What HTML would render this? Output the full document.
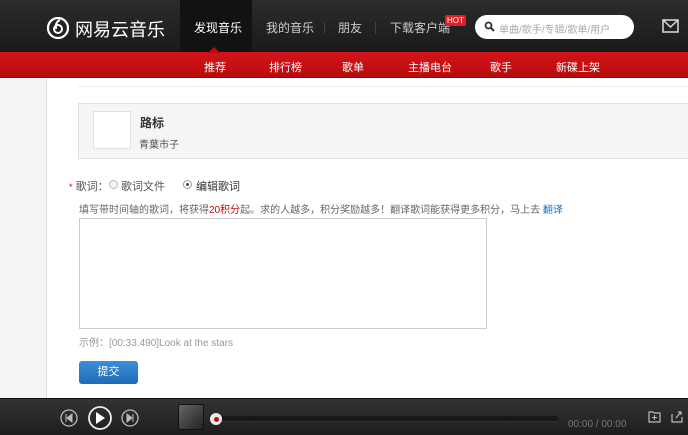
<!DOCTYPE html>
<html><head><meta charset="utf-8"><style>
*{margin:0;padding:0;box-sizing:border-box}
body{width:688px;height:435px;overflow:hidden;position:relative;background:#fff;font-family:"Liberation Sans","Noto Sans CJK SC",sans-serif;font-size:12px;color:#333}
.abs{position:absolute}
#hd{left:0;top:0;width:688px;height:52px;background:linear-gradient(#2c2c2c,#1a1a1a)}
#sub{left:0;top:52px;width:688px;height:26px;background:linear-gradient(#d4141a,#b80c0c);border-bottom:1px solid #a40011}
.nav{color:#ccc;font-size:12px;top:19px}
.sn{color:#fff;font-size:11px;top:59px}
</style></head><body>
<div id="hd" class="abs"></div>
<div class="abs" style="left:180px;top:0;width:72px;height:52px;background:#121212"></div>
<svg class="abs" style="left:47px;top:17px" width="22" height="22" viewBox="0 0 22 22"><circle cx="11" cy="11" r="10" fill="none" stroke="#fff" stroke-width="2.2"/><circle cx="11" cy="12" r="4" fill="none" stroke="#fff" stroke-width="2"/><path d="M13 3 Q8 5 9 12" stroke="#fff" stroke-width="2" fill="none"/></svg>
<div class="abs" style="left:75px;top:16px;color:#fff;font-size:18px">网易云音乐</div>
<div class="abs nav" style="left:194px;color:#fff">发现音乐</div>
<div class="abs nav" style="left:266px">我的音乐</div>
<div class="abs" style="left:324px;top:22px;width:1px;height:12px;background:#444"></div>
<div class="abs nav" style="left:338px">朋友</div>
<div class="abs" style="left:375px;top:22px;width:1px;height:12px;background:#444"></div>
<div class="abs nav" style="left:390px">下载客户端</div>
<div class="abs" style="left:445px;top:15px;background:#e21e26;color:#fff;font-size:8px;padding:1px 2px;border-radius:2px">HOT</div>
<div class="abs" style="left:475px;top:15px;width:159px;height:24px;border-radius:12px;background:#fff"></div>
<svg class="abs" style="left:484px;top:21px" width="11" height="11" viewBox="0 0 11 11"><circle cx="4.5" cy="4.5" r="3" fill="none" stroke="#333" stroke-width="1.8"/><path d="M7 7l3 3" stroke="#333" stroke-width="2"/></svg>
<div class="abs" style="left:499px;top:21px;color:#aaa;font-size:10px">单曲/歌手/专辑/歌单/用户</div>
<svg class="abs" style="left:662px;top:19px" width="17" height="14" viewBox="0 0 17 14"><rect x="1" y="1" width="15" height="12" fill="none" stroke="#ddd" stroke-width="1.5"/><path d="M1 1l7.5 7 7.5-7" fill="none" stroke="#ddd" stroke-width="1.5"/></svg>
<div id="sub" class="abs"></div>
<div class="abs" style="left:208px;top:47px;width:0;height:0;border-left:6px solid transparent;border-right:6px solid transparent;border-bottom:6px solid #c20c0c"></div>
<div class="abs sn" style="left:204px">推荐</div>
<div class="abs sn" style="left:269px">排行榜</div>
<div class="abs sn" style="left:342px">歌单</div>
<div class="abs sn" style="left:408px">主播电台</div>
<div class="abs sn" style="left:490px">歌手</div>
<div class="abs sn" style="left:556px">新碟上架</div>
<div class="abs" style="left:0;top:79px;width:47px;height:320px;background:#f5f5f5;border-right:1px solid #ddd"></div>
<div class="abs" style="left:78px;top:86px;width:610px;height:1px;background:#eee"></div>
<div class="abs" style="left:78px;top:103px;width:612px;height:56px;background:#f5f5f5;border:1px solid #e2e2e2"></div>
<div class="abs" style="left:93px;top:111px;width:38px;height:38px;background:#fff;border:1px solid #e0e0e0"></div>
<div class="abs" style="left:140px;top:114px;font-weight:bold;font-size:12px">路标</div>
<div class="abs" style="left:139px;top:136px;font-size:10px;color:#555">青葉市子</div>
<div class="abs" style="left:69px;top:178px;font-size:11px;color:#555"><span style="color:#c20c0c;font-size:9px">*</span> 歌词：</div>
<div class="abs" style="left:109px;top:180px;width:9px;height:9px;border:1px solid #bbb;border-radius:50%;background:#f3f3f3"></div>
<div class="abs" style="left:121px;top:178px;font-size:11px;color:#555">歌词文件</div>
<div class="abs" style="left:183px;top:180px;width:9px;height:9px;border:1px solid #999;border-radius:50%;background:#fff"><div style="margin:2px;width:3px;height:3px;border-radius:50%;background:#2a4f8a"></div></div>
<div class="abs" style="left:196px;top:178px;font-size:11px;color:#333">编辑歌词</div>
<div class="abs" style="left:79px;top:201px;font-size:10px;color:#666">填写带时间轴的歌词，将获得<span style="color:#c20c0c">20积分</span>起。求的人越多，积分奖励越多！翻译歌词能获得更多积分，马上去 <span style="color:#0c73c2">翻译</span></div>
<div class="abs" style="left:79px;top:218px;width:408px;height:111px;border:1px solid #cdcdcd;background:#fff"></div>
<div class="abs" style="left:79px;top:334px;font-size:10px;color:#999">示例：[00:33.490]Look at the stars</div>
<div class="abs" style="left:79px;top:361px;width:59px;height:23px;border-radius:3px;background:linear-gradient(#3d8fd8,#1f6ab6);color:#fff;font-size:11px;text-align:center;line-height:23px">提交</div>
<div class="abs" style="left:0;top:398px;width:688px;height:37px;background:linear-gradient(#333,#1e1e1e);border-top:1px solid #111"></div>
<svg class="abs" style="left:58px;top:405px" width="90" height="26" viewBox="0 0 90 26"><circle cx="11" cy="13" r="8" fill="none" stroke="#bbb" stroke-width="1.3"/><path d="M8 9v8M14 9l-5 4 5 4z" stroke="#bbb" fill="#bbb"/><circle cx="42" cy="13" r="11" fill="none" stroke="#eee" stroke-width="1.8"/><path d="M38 7l9 6-9 6z" fill="#fff"/><circle cx="72" cy="13" r="8" fill="none" stroke="#bbb" stroke-width="1.3"/><path d="M75 9v8M69 9l5 4-5 4z" stroke="#bbb" fill="#bbb"/></svg>
<div class="abs" style="left:178px;top:404px;width:26px;height:26px;background:linear-gradient(135deg,#666,#222);border-radius:2px;border:1px solid #111"></div>
<div class="abs" style="left:210px;top:416px;width:348px;height:6px;border-radius:3px;background:#181818;border-bottom:1px solid #333"></div>
<div class="abs" style="left:210px;top:413px;width:12px;height:12px;border-radius:50%;background:#eee"><div style="margin:3.5px;width:5px;height:5px;border-radius:50%;background:#c20c0c"></div></div>
<div class="abs" style="left:568px;top:419px;font-size:10px;color:#777">00:00 / 00:00</div>
<svg class="abs" style="left:648px;top:409px" width="36" height="14" viewBox="0 0 36 14"><path d="M1 3h4l1 1h6v9H1z" fill="none" stroke="#bbb" stroke-width="1.2"/><path d="M6.5 6v5M4 8.5h5" stroke="#bbb"/><path d="M24 5v8h10V8" fill="none" stroke="#bbb" stroke-width="1.2"/><path d="M28 9l5-6M30 3h3v3" fill="none" stroke="#bbb" stroke-width="1.2"/></svg>
</body></html>
